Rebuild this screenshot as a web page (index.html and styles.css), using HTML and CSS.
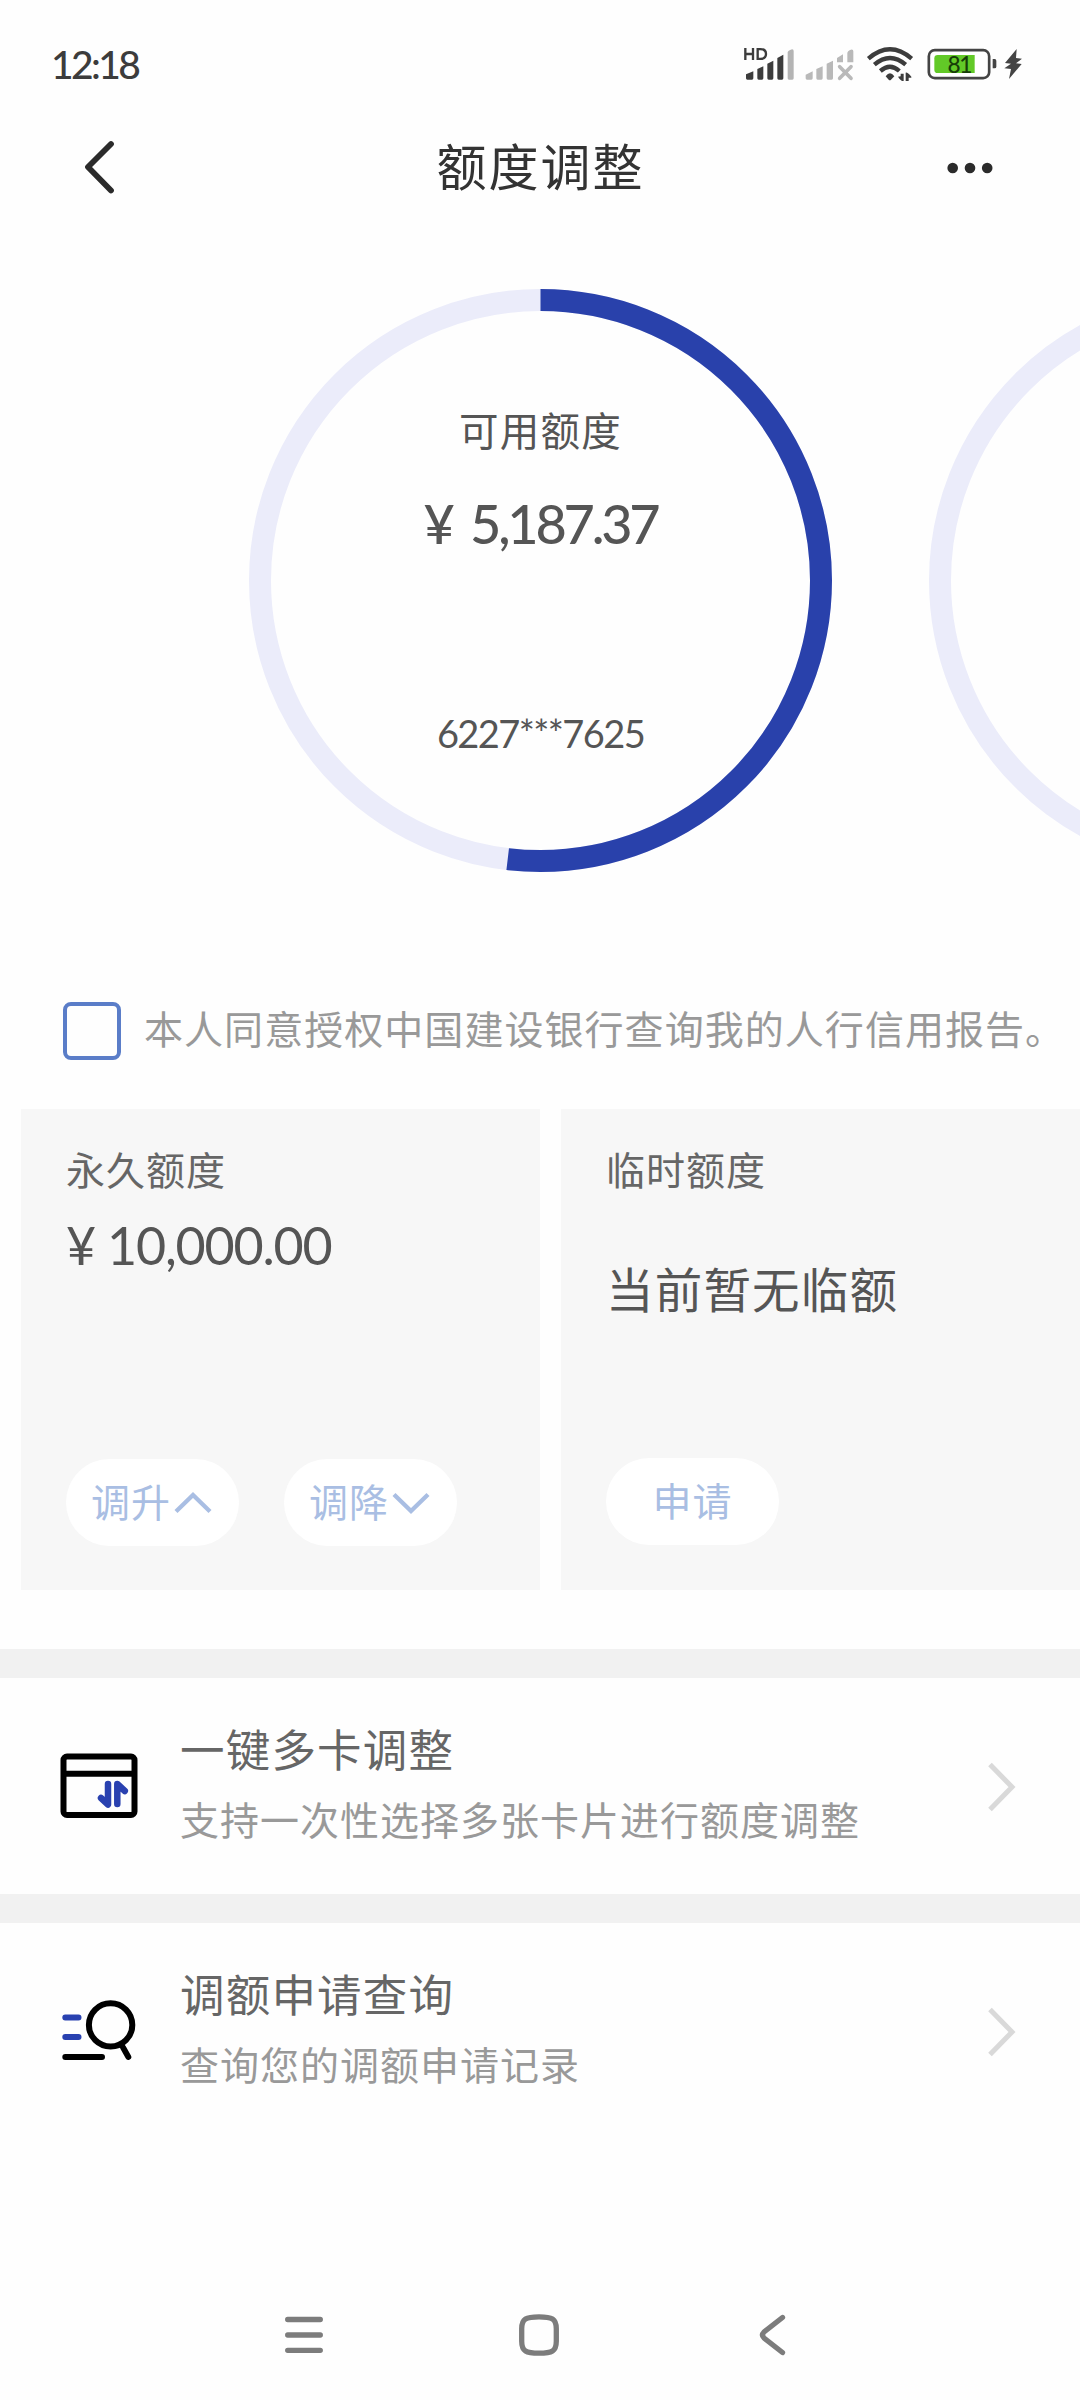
FILE: index.html
```html
<!DOCTYPE html>
<html lang="zh-CN">
<head>
<meta charset="utf-8">
<title>额度调整</title>
<link rel="stylesheet" href="styles.css">
</head>
<body>
<div class="status-bar">
  <span class="clock">12:18</span>
  <div class="status-icons">
    <svg class="signal" width="51" height="34" viewBox="72 82 153 102" fill="#3c3c3c">
      <g fill="none" stroke="#3c3c3c" stroke-width="7"><path d="M76 85v36M99 85v36M76 103h23M113 88.500v29h8q17 0 17-14.500t-17-14.500z"/></g>
      <path d="M78 164l22-9v21q0 4-4 4H82q-4 0-4-4zM112 148l18-8v36q0 4-4 4h-10q-4 0-4-4zM142 132l18-9v53q0 4-4 4h-10q-4 0-4-4zM172 115l18-10v71q0 4-4 4h-10q-4 0-4-4z"/>
      <path fill="#b4b4b4" d="M203 97q2-5 9-7 9-3 9 4v82q0 4-4 4h-10q-4 0-4-4z"/>
    </svg>
    <svg class="no-sim" width="50" height="34" viewBox="256 82 150 102" fill="#b9b9b9">
      <path d="M258 165l21-10v21q0 4-4 4h-13q-4 0-4-4zM290 148l19-8v36q0 4-4 4h-11q-4 0-4-4zM321 132l19-9v53q0 4-4 4h-11q-4 0-4-4zM352 115l18-11v24h-18zM383 99q1-5 8-8 10-4 10 4v33h-18z"/>
      <path d="M360 141l34 35M394 141l-34 35" stroke="#b9b9b9" stroke-width="11" stroke-linecap="round"/>
    </svg>
    <svg class="wifi" width="48" height="36" viewBox="438 80 144 108">
      <g fill="none" stroke="#3c3c3c" stroke-width="13"><path d="M445 118Q510 62 575 118M463 136Q510 96 557 136M481 155Q510 130 538 155"/></g>
      <path fill="#3c3c3c" d="M497 171q13-18 26 0l-10 10q-3 3-7 0zM534 172l8-1v-8h9v22q-7 2-17-13zM557 185v-25q5-2 17 12v3h-8v10z"/>
    </svg>
    <svg class="battery" width="70" height="32" viewBox="622 84 210 96">
      <rect x="627.500" y="90.500" width="181" height="84" rx="18" fill="#fff" stroke="#444" stroke-width="8"/>
      <path fill="#62c927" d="M654 105h111v54H654q-10 0-10-10v-34q0-10 10-10z"/>
      <path fill="#444" d="M819 117h6q5 0 5 5v18q0 5-5 5h-6z"/>
      <text class="battery-level" x="719" y="158">81</text>
    </svg>
    <svg class="bolt" width="18" height="32" viewBox="852 84 54 96"><path fill="#444" d="M890 87l-35 42 18 2-20 14 20 2-6 30 38-45-17-2 18-14-18-2z"/></svg>
  </div>
</div>
<header class="header">
  <svg class="back" width="34" height="58" viewBox="0 0 34 58"><path d="M28 6L5 29l23 23.500" fill="none" stroke="#2b2b2b" stroke-width="5.800" stroke-linecap="round" stroke-linejoin="round"/></svg>
  <h1 class="title">额度调整</h1>
  <svg class="more" width="46" height="12" viewBox="0 0 46 12" fill="#2b2b2b"><circle cx="5.700" cy="6" r="5.300"/><circle cx="23" cy="6" r="5.300"/><circle cx="40.200" cy="6" r="5.300"/></svg>
</header>
<section class="carousel">
  <div class="gauge">
    <svg class="ring" width="583" height="583" viewBox="0 0 583 583">
      <circle class="track" cx="291.500" cy="291.500" r="280.500"/>
      <circle class="progress" cx="291.500" cy="291.500" r="280.500" pathLength="100" transform="rotate(-90 291.500 291.500)"/>
    </svg>
    <div class="gauge-text">
      <span class="gauge-label">可用额度</span>
      <span class="gauge-amount">¥ 5,187.37</span>
      <span class="gauge-card">6227***7625</span>
    </div>
  </div>
  <div class="gauge gauge-next">
    <svg class="ring" width="583" height="583" viewBox="0 0 583 583"><circle class="track" cx="291.500" cy="291.500" r="280.500"/></svg>
  </div>
</section>
<label class="consent"><span class="checkbox"></span><span class="consent-text">本人同意授权中国建设银行查询我的人行信用报告。</span></label>
<section class="cards">
  <div class="card">
    <div class="card-label">永久额度</div>
    <div class="card-amount">¥ 10,000.00</div>
    <div class="actions">
      <button class="pill">调升<svg width="38" height="24" viewBox="0 0 38 24"><path d="M2 20.500L19 4l17 16.500"/></svg></button>
      <button class="pill">调降<svg width="38" height="24" viewBox="0 0 38 24"><path d="M2 3.500L19 20 36 3.500"/></svg></button>
    </div>
  </div>
  <div class="card">
    <div class="card-label">临时额度</div>
    <div class="card-note">当前暂无临额</div>
    <div class="actions"><button class="pill pill-center">申请</button></div>
  </div>
</section>
<nav class="links">
  <a class="link">
    <svg class="link-icon" width="78" height="66" viewBox="0 0 78 66" fill="none" stroke="#000" stroke-width="6">
      <rect x="3.500" y="3.500" width="71" height="58.500" rx="3.500"/><path d="M4 20.700h70"/>
      <path d="M41 45l7 6.500V31M57.300 51V31l7.500 7" stroke="#2941b0" stroke-width="6.500" stroke-linecap="round" stroke-linejoin="round"/>
    </svg>
    <div class="link-body"><div class="link-title">一键多卡调整</div><div class="link-sub">支持一次性选择多张卡片进行额度调整</div></div>
    <svg class="chevron" width="28" height="50" viewBox="0 0 28 50"><path d="M2 2.500L24 25 2 47.500"/></svg>
  </a>
  <a class="link">
    <svg class="link-icon" width="78" height="66" viewBox="0 1.600 78 66" fill="none" stroke="#000" stroke-width="6" stroke-linecap="round">
      <circle cx="50.600" cy="28.500" r="21.700"/><path d="M5.300 60.500H42M63 51l5.300 9.500"/>
      <path d="M5.300 21H18.500M5.300 40.500H18.500" stroke="#2941b0"/>
    </svg>
    <div class="link-body"><div class="link-title">调额申请查询</div><div class="link-sub">查询您的调额申请记录</div></div>
    <svg class="chevron" width="28" height="50" viewBox="0 0 28 50"><path d="M2 2.500L24 25 2 47.500"/></svg>
  </a>
</nav>
<footer class="system-nav">
  <svg width="40" height="44" viewBox="0 0 40 44"><path d="M3.700 6.500h32.600M3.700 22h32.600M3.700 37.300h32.600"/></svg>
  <svg width="42" height="44" viewBox="0 0 42 44"><path d="M21 3.800c13 0 17.300 2 17.300 12v12.400c0 10-4.300 12-17.300 12s-17.300-2-17.300-12V15.800c0-10 4.300-12 17.300-12z"/></svg>
  <svg width="30" height="44" viewBox="0 0 30 44"><path d="M25.500 4.500L7 19q-3 3 0 6l18.500 14.500"/></svg>
</footer>
</body>
</html>
```

FILE: styles.css
```css
* { box-sizing: border-box; margin: 0; padding: 0; }
body {
  width: 1080px;
  height: 2400px;
  overflow: hidden;
  background: #fefefe;
  font-family: "Noto Sans CJK SC", sans-serif;
  color: #666;
  display: flex;
  flex-direction: column;
}
svg { display: block; flex: none; }
span, div, h1 { white-space: nowrap; }

.status-bar {
  height: 104px;
  padding: 36px 58px 0 51px;
  display: flex;
  justify-content: space-between;
  align-items: flex-start;
}
.clock { font: 500 39px/56px Lato, sans-serif; color: #3c3c3c; letter-spacing: -2.600px; }
.status-icons { display: flex; padding-top: 11px; }
.no-sim { margin-left: 10px; }
.wifi { margin: -1px 0 0 11px; }
.battery { margin: 1px 0 0 13px; }
.bolt { margin: 1px 0 0 7px; }
.battery-level { font: 500 68px Lato, sans-serif; text-anchor: middle; fill: #163d08; letter-spacing: -4px; }

.header {
  height: 126px;
  padding: 0 87px 0 83px;
  display: grid;
  grid-template-columns: 1fr auto 1fr;
  align-items: start;
}
.back { margin-top: 34px; }
.title { font-size: 50px; font-weight: 400; line-height: 70px; letter-spacing: 2px; color: #333; margin: 25px 0 0 5px; }
.more { justify-self: end; margin-top: 58px; }

.carousel { height: 772px; padding: 59px 0 0 249px; display: flex; gap: 97px; overflow: hidden; }
.gauge { width: 583px; height: 583px; flex: none; display: grid; }
.gauge-next { width: 151px; overflow: hidden; }
.ring, .gauge-text { grid-area: 1 / 1; }
.ring circle { fill: none; stroke-width: 22; }
.ring .track { stroke: #ebecfa; }
.ring .progress { stroke: #2941ab; stroke-dasharray: 51.87 100; }
.gauge-text { display: flex; flex-direction: column; align-items: center; padding-top: 110px; color: #555; }
.gauge-label { font-size: 39.500px; line-height: 60px; letter-spacing: 1.200px; }
.gauge-amount { font: 500 54px/70px Lato, sans-serif; margin-top: 30px; letter-spacing: -3.200px; word-spacing: 8px; }
.gauge-card { font: 400 38px/60px Lato, sans-serif; margin-top: 144px; letter-spacing: -1.600px; }

.consent { height: 107px; padding-left: 63px; display: flex; align-items: flex-start; gap: 23px; }
.checkbox { width: 58px; height: 58px; border: 4px solid #5a7dc8; border-radius: 8px; }
.consent-text { font-size: 39px; line-height: 50px; letter-spacing: 1.050px; color: #999; }

.cards { display: flex; gap: 21px; padding-left: 21px; height: 540px; }
.card { width: 519px; height: 481px; background: #f7f7f7; padding: 34px 45px 44px; display: flex; flex-direction: column; }
.card-label { font-size: 39px; line-height: 50px; letter-spacing: 1px; }
.card-amount { font: 400 52px/60px Lato, sans-serif; color: #555; margin-top: 22px; letter-spacing: -1.200px; }
.card-note { font-size: 47.500px; line-height: 60px; letter-spacing: 1.200px; color: #555; margin-top: 65px; }
.actions { display: flex; gap: 45px; margin-top: auto; }
.pill {
  width: 173px;
  height: 87px;
  border: 0;
  border-radius: 44px;
  background: #fff;
  color: #a9bee3;
  font: 400 39px/50px "Noto Sans CJK SC", sans-serif;
  letter-spacing: 1px;
  display: flex;
  align-items: center;
  padding: 0 0 6px 25px;
}
.pill svg { margin: 6px 0 0 3px; }
.pill path { fill: none; stroke: #a9bee3; stroke-width: 4.300; }
.pill-center { justify-content: center; padding: 0 0 6px; margin-bottom: 1px; }

.link { display: flex; height: 245px; border-top: 29px solid #f1f1f1; padding: 0 64px 0 60px; }
.link-icon { margin-top: 75px; }
.link-body { margin: 40px 0 0 42px; flex: 1; }
.link-title { font-size: 44.500px; line-height: 60px; letter-spacing: 1.200px; color: #666; }
.link-sub { font-size: 39px; line-height: 50px; letter-spacing: 1px; color: #999; margin-top: 15px; }
.chevron { margin-top: 84px; }
.chevron path { fill: none; stroke: #d9d9d9; stroke-width: 5; }

.system-nav { margin-top: auto; height: 87px; padding: 0 293px 0 284px; display: flex; justify-content: space-between; }
.system-nav svg:nth-child(2) { margin-right: 4px; }
.system-nav path { fill: none; stroke: #7c7c7c; stroke-width: 5.300; stroke-linecap: round; }
```
